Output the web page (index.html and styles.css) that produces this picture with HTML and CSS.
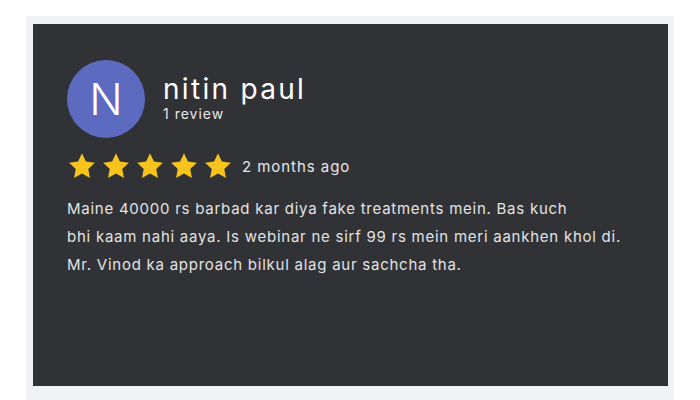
FILE: index.html
```html
<!DOCTYPE html>
<html>
<head>
<meta charset="utf-8">
<link rel="stylesheet" href="styles.css">
</head>
<body>
<div class="panel">
  <div class="card">
    <div class="head">
      <div class="avatar">N</div>
      <div class="who">
        <div class="name">nitin paul</div>
        <div class="count">1 review</div>
      </div>
    </div>
    <div class="rating">
      <div class="stars">
        <svg viewBox="0 0 24 24" class="star"><path d="M12 1.8l3.1 6.6 7.2.9-5.3 5 1.4 7.2L12 18l-6.4 3.5 1.4-7.2-5.3-5 7.2-.9z"/></svg>
        <svg viewBox="0 0 24 24" class="star"><path d="M12 1.8l3.1 6.6 7.2.9-5.3 5 1.4 7.2L12 18l-6.4 3.5 1.4-7.2-5.3-5 7.2-.9z"/></svg>
        <svg viewBox="0 0 24 24" class="star"><path d="M12 1.8l3.1 6.6 7.2.9-5.3 5 1.4 7.2L12 18l-6.4 3.5 1.4-7.2-5.3-5 7.2-.9z"/></svg>
        <svg viewBox="0 0 24 24" class="star"><path d="M12 1.8l3.1 6.6 7.2.9-5.3 5 1.4 7.2L12 18l-6.4 3.5 1.4-7.2-5.3-5 7.2-.9z"/></svg>
        <svg viewBox="0 0 24 24" class="star"><path d="M12 1.8l3.1 6.6 7.2.9-5.3 5 1.4 7.2L12 18l-6.4 3.5 1.4-7.2-5.3-5 7.2-.9z"/></svg>
      </div>
      <span class="ago">2 months ago</span>
    </div>
    <p class="text">Maine 40000 rs barbad kar diya fake treatments mein. Bas kuch<br>bhi kaam nahi aaya. Is webinar ne sirf 99 rs mein meri aankhen khol di.<br>Mr. Vinod ka approach bilkul alag aur sachcha tha.</p>
  </div>
</div>
</body>
</html>
```
FILE: styles.css
```css
html, body {
  margin: 0;
  padding: 0;
  background: #ffffff;
  font-family: "Inter", "Open Sans", sans-serif;
}
body {
  width: 700px;
  height: 400px;
  overflow: hidden;
}
.panel {
  margin: 16px 26px 0 26px;
  padding: 8px 6px 14px 7px;
  background: #f1f2f6;
  box-sizing: border-box;
  height: 384px;
}
.card {
  background: #313236;
  height: 362px;
  box-sizing: border-box;
  padding: 36px 34px 0 34px;
}
.head {
  display: flex;
  align-items: center;
  gap: 18px;
}
.avatar {
  width: 78px;
  height: 78px;
  border-radius: 50%;
  background: #5c6bc0;
  color: #ffffff;
  font-size: 44px;
  font-weight: 300;
  display: flex;
  align-items: center;
  justify-content: center;
}
.who {
  display: flex;
  flex-direction: column;
  margin-top: -2px;
}
.name {
  color: #ffffff;
  font-size: 28px;
  line-height: 32px;
  letter-spacing: 2.3px;
}
.count {
  color: #e6e6e6;
  font-size: 14px;
  line-height: 18px;
  letter-spacing: 1px;
}
.rating {
  display: flex;
  align-items: center;
  margin-top: 13px;
}
.stars {
  display: flex;
  gap: 4px;
}
.star {
  width: 30px;
  height: 30px;
  fill: #f7c31d;
}
.ago {
  color: #e6e6e6;
  font-size: 15px;
  margin-left: 9px;
  letter-spacing: 0.95px;
}
.text {
  margin: 14px 0 0 0;
  color: #e3e3e3;
  font-size: 15px;
  line-height: 28px;
  letter-spacing: 0.75px;
}
```
